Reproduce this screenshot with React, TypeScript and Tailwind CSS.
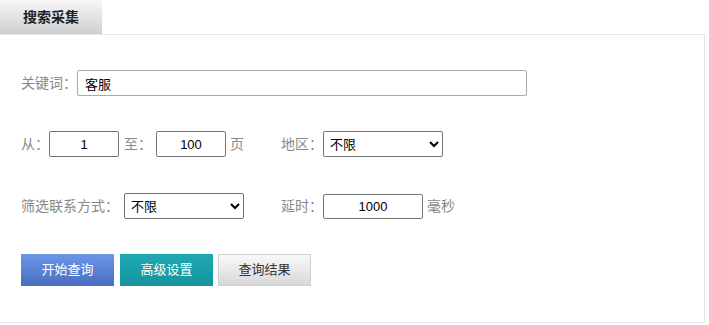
import React from "react";

const font = { fontFamily: '"Liberation Sans", "Noto Sans CJK SC", sans-serif' };

export default function App() {
  return (
    <div className="w-[709px] h-[325px] bg-white text-[13px]" style={font}>
      <div className="h-[34px] w-[102px] flex items-center justify-center bg-gradient-to-b from-[#f7f7f7] to-[#cfcfcf] text-[14px] font-bold text-[#222]">
        搜索采集
      </div>
      <div className="w-[705px] h-[289px] border border-l-0 border-[#e6e6e6] pl-[21px] flex flex-col">
        <div className="mt-[35px] h-[26px] flex items-center text-[14px]">
          <span className="text-[#888] w-[56px]">关键词：</span>
          <input
            className="w-[450px] h-[26px] border border-[#a9a9a9] rounded-[2px] px-[7px] text-[13px] text-black outline-none"
            defaultValue="客服"
          />
        </div>
        <div className="mt-[35px] h-[26px] flex items-center text-[#888] text-[14px]">
          <span className="w-[28px]">从：</span>
          <input
            className="w-[70px] h-[26px] border border-[#767676] rounded-[2px] text-center text-black text-[13px] outline-none"
            defaultValue="1"
          />
          <span className="ml-[5px] w-[32px]">至：</span>
          <input
            className="w-[70px] h-[26px] border border-[#767676] rounded-[2px] text-center text-black text-[13px] outline-none"
            defaultValue="100"
          />
          <span className="ml-[4px] w-[51px]">页</span>
          <span className="w-[42px]">地区：</span>
          <select className="w-[120px] h-[26px] border border-[#767676] rounded-[2px] text-black text-[13px] pl-[2px] outline-none">
            <option>不限</option>
          </select>
        </div>
        <div className="mt-[36px] h-[26px] flex items-center text-[#888] text-[14px]">
          <span className="w-[103px]">筛选联系方式：</span>
          <select className="w-[120px] h-[26px] border border-[#767676] rounded-[2px] text-black text-[13px] pl-[2px] outline-none">
            <option>不限</option>
          </select>
          <span className="ml-[37px] w-[42px]">延时：</span>
          <input
            className="w-[100px] h-[25px] border border-[#767676] rounded-[2px] text-center text-black text-[13px] outline-none"
            defaultValue="1000"
          />
          <span className="ml-[4px]">毫秒</span>
        </div>
        <div className="mt-[35px] flex h-[32px]">
          <button className="w-[93px] h-[32px] bg-gradient-to-b from-[#6b98ea] to-[#4a6dbf] text-white text-[13px]">
            开始查询
          </button>
          <button className="ml-[6px] w-[93px] h-[32px] bg-gradient-to-b from-[#1eaab3] to-[#16949e] text-white text-[13px]">
            高级设置
          </button>
          <button className="ml-[5px] w-[93px] h-[32px] border border-[#cfcfcf] bg-gradient-to-b from-[#f9f9f9] to-[#d8d8d8] text-[#333] text-[13px]">
            查询结果
          </button>
        </div>
      </div>
    </div>
  );
}
